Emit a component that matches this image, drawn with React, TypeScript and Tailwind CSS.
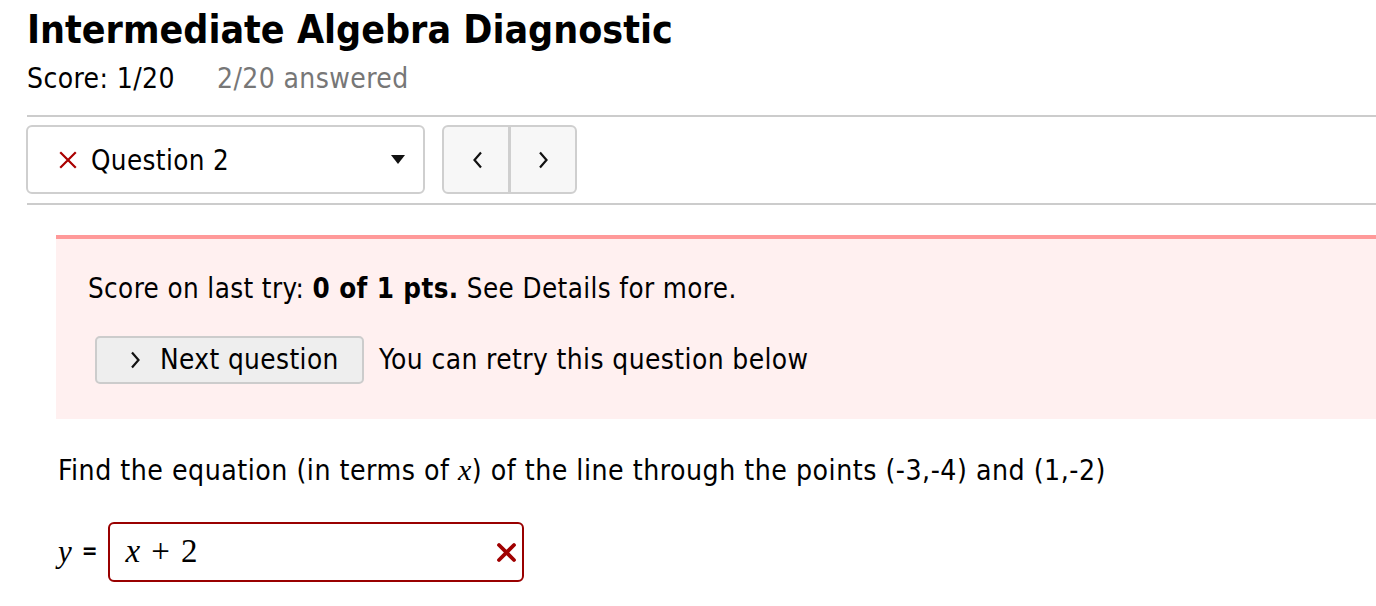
import React from 'react';

// ── small inline icons ───────────────────────

const IconCross = () => (
  <svg width="18" height="18" viewBox="0 0 18 18" fill="none">
    <path d="M2 2l14 14M16 2L2 16" stroke="#aa0000" strokeWidth="2.2" strokeLinecap="square" />
  </svg>
);

const IconCaret = () => (
  <svg width="14" height="9" viewBox="0 0 14 9">
    <path d="M0 0h14L7 9z" fill="#111" />
  </svg>
);

const IconChevLeft = () => (
  <svg width="11" height="18" viewBox="0 0 11 18" fill="none">
    <path d="M9 1.5L2.5 9 9 16.5" stroke="#111" strokeWidth="2.2" />
  </svg>
);

const IconChevRight = () => (
  <svg width="11" height="18" viewBox="0 0 11 18" fill="none">
    <path d="M2 1.5L8.5 9 2 16.5" stroke="#111" strokeWidth="2.2" />
  </svg>
);

const IconWrong = () => (
  <svg width="21" height="21" viewBox="0 0 21 21" fill="none">
    <path d="M3 3l15 15M18 3L3 18" stroke="#a00000" strokeWidth="3.8" strokeLinecap="round" />
  </svg>
);

export default function App() {
  return (
    <div className="min-h-screen bg-white text-black font-['DejaVu_Sans_Condensed','Liberation_Sans',sans-serif] overflow-hidden">
      <div className="pl-[27px]">
        {/* header */}
        <h1 className="h-[58px] leading-[60px] text-[39px] font-bold whitespace-nowrap">
          Intermediate Algebra Diagnostic
        </h1>
        <div className="h-[42px] leading-[42px] text-[28px] flex gap-[42px] whitespace-nowrap tracking-[0.4px]">
          <span>Score: 1/20</span>
          <span className="text-[#777]">2/20 answered</span>
        </div>

        <div className="mt-[15px] h-[2px] bg-[#cccccc]" />

        {/* question picker */}
        <div className="mt-[8px] flex gap-[17px] h-[69px]">
          <div className="w-[399px] -ml-px rounded-[6px] border-2 border-[#cfcfcf] bg-white flex items-center pl-[31px] pr-[18px]">
            <IconCross />
            <span className="ml-[14px] text-[27.5px] tracking-[0.4px] leading-none pt-[3px]">Question 2</span>
            <span className="ml-auto"><IconCaret /></span>
          </div>
          <div className="w-[135px] rounded-[6px] border-2 border-[#cfcfcf] bg-[#f7f7f7] flex">
            <button className="w-[67px] flex items-center justify-center border-r-[3px] border-[#cfcfcf] pl-[3px]">
              <IconChevLeft />
            </button>
            <button className="flex-1 flex items-center justify-center">
              <IconChevRight />
            </button>
          </div>
        </div>

        <div className="mt-[9px] h-[2px] bg-[#cccccc]" />

        {/* feedback panel */}
        <div className="mt-[30px] ml-[29px] border-t-4 border-[#ff9999] bg-[#fff0f0] pl-[32px] pt-[29px] pb-[35px]">
          <p className="h-[40px] leading-[40px] text-[27.5px] tracking-[0.4px] whitespace-nowrap">
            Score on last try: <b>0 of 1 pts.</b> See Details for more.
          </p>
          <div className="mt-[28px] flex items-center gap-[15px]">
            <button className="ml-[7px] h-[48px] w-[269px] rounded-[5px] border-2 border-[#cccccc] bg-[#eeeeee] flex items-center pl-[33px] gap-[19px] text-[27.7px] tracking-[0.4px]">
              <IconChevRight />
              <span>Next question</span>
            </button>
            <span className="text-[27.9px] tracking-[0.4px] whitespace-nowrap">You can retry this question below</span>
          </div>
        </div>

        {/* question */}
        <p className="mt-[31px] ml-[31px] h-[40px] leading-[40px] text-[28.2px] tracking-[0.5px] whitespace-nowrap">
          Find the equation (in terms of{' '}
          <i className="font-['Liberation_Serif',serif] text-[30px]">x</i>) of the line through the points
          (-3,-4) and (1,-2)
        </p>

        <div className="mt-[32px] ml-[31px] flex items-center h-[60px]">
          <i className="font-['Liberation_Serif',serif] text-[31px]">y</i>
          <span className="ml-[10px] text-[21px] font-bold">=</span>
          <div className="ml-[10px] w-[416px] h-[60px] rounded-[6px] border-2 border-[#990000] flex items-center pl-[16px] pr-[5px]">
            <span className="font-['Liberation_Serif',serif] text-[33px] whitespace-nowrap">
              <i>x</i>
              <span className="mx-[11px]">+</span>
              <span>2</span>
            </span>
            <span className="ml-auto"><IconWrong /></span>
          </div>
        </div>
      </div>
    </div>
  );
}
